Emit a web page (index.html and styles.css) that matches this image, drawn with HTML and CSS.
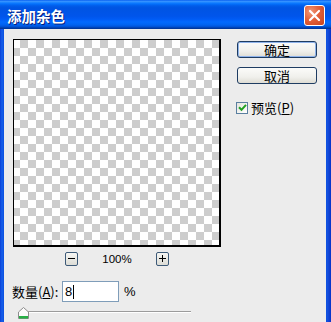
FILE: index.html
```html
<!DOCTYPE html>
<html>
<head>
<meta charset="utf-8">
<link rel="stylesheet" href="styles.css">
</head>
<body>
<div class="window">
  <div class="titlebar">
    <span class="title">添加杂色</span>
    <span class="close">
      <svg width="13" height="13" viewBox="0 0 13 13"><path d="M2 2 L11 11 M11 2 L2 11" stroke="#fff" stroke-width="2.2" stroke-linecap="round"/></svg>
    </span>
  </div>
  <div class="client">
    <div class="top">
      <div class="left">
        <div class="preview"></div>
        <div class="zoomrow">
          <span class="zbtn"><svg width="7" height="7" viewBox="0 0 7 7"><path d="M0 3.5H7" stroke="#000" stroke-width="1"/></svg></span>
          <span class="zlabel">100%</span>
          <span class="zbtn"><svg width="7" height="7" viewBox="0 0 7 7"><path d="M0 3.5H7M3.5 0V7" stroke="#000" stroke-width="1"/></svg></span>
        </div>
      </div>
      <div class="right">
        <div class="btn default">确定</div>
        <div class="btn cancel">取消</div>
        <div class="check">
          <span class="box"><svg width="9" height="9" viewBox="0 0 9 9"><path d="M1 4.2 L3.5 6.8 L8 1.8" fill="none" stroke="#21a121" stroke-width="2"/></svg></span>
          <span class="clabel">预览(<u>P</u>)</span>
        </div>
      </div>
    </div>
    <div class="amount">
      <span class="alabel">数量(<u>A</u>):</span>
      <div class="input"><span>8</span><i class="caret"></i></div>
      <span class="pct">%</span>
    </div>
    <div class="slider">
      <div class="track"></div>
      <svg class="thumb" width="11" height="12" viewBox="0 0 11 12"><path d="M0.5 5 L5.5 0.5 L10.5 5 V11.5 H0.5 Z" fill="#fbfbfb" stroke="#8c8c8c"/><rect x="1" y="9" width="9" height="2.5" fill="#27b045"/></svg>
    </div>
  </div>
</div>
</body>
</html>
```
FILE: styles.css
```css
html, body {
  margin: 0;
  padding: 0;
}
body {
  width: 331px;
  height: 322px;
  overflow: hidden;
  font-family: "Liberation Sans", "Noto Sans CJK SC", sans-serif;
}
.window {
  width: 331px;
  height: 322px;
  display: flex;
  flex-direction: column;
  background: linear-gradient(90deg, #0a3fd8 0, #1660ea 2px, #0b4fe0 4px, #0a4ee0 326px, #1553e0 327px, #0832c8 331px);
}
.titlebar {
  height: 29px;
  flex: none;
  display: flex;
  align-items: center;
  justify-content: space-between;
  padding: 0 6px 0 7px;
  background: linear-gradient(180deg, #0058ee 0%, #3a93ff 4%, #288eff 7%, #127dff 10%, #036ffc 14%, #0262ee 18%, #0057e5 24%, #0054e3 30%, #0055eb 56%, #005bf5 66%, #026afe 76%, #0062ef 86%, #0052d6 92%, #0040ab 96%, #003092 100%);
}
.title {
  color: #fff;
  font-family: "Noto Sans CJK SC", sans-serif;
  font-weight: bold;
  font-size: 14.5px;
  text-shadow: 1px 1px 0 #0a1e7a;
  margin-top: 1px;
}
.close {
  width: 19px;
  height: 19px;
  border: 1px solid #fff;
  border-radius: 3px;
  background: radial-gradient(circle at 30% 30%, #f09878 0, #e2603a 45%, #c8421c 100%);
  display: flex;
  align-items: center;
  justify-content: center;
  margin-top: 1px;
}
.client {
  flex: 1;
  margin: 0 5px 0 4px;
  background: #ececec;
  padding: 10px 0 0 9px;
  font-family: "Noto Sans CJK SC", sans-serif;
  font-size: 12px;
  color: #000;
}
.top {
  display: flex;
  gap: 16px;
}
.left {
  display: flex;
  flex-direction: column;
}
.preview {
  width: 205px;
  height: 205px;
  border-style: solid;
  border-color: #000;
  border-width: 1px 2px 2px 1px;
  background-color: #fff;
  background-image:
    linear-gradient(45deg, #cdcdcd 25%, transparent 25%, transparent 75%, #cdcdcd 75%),
    linear-gradient(45deg, #cdcdcd 25%, transparent 25%, transparent 75%, #cdcdcd 75%);
  background-size: 16px 16px;
  background-position: -2px 0px, 6px 8px;
}
.zoomrow {
  display: flex;
  align-items: center;
  margin-top: 4px;
  padding-left: 52px;
  height: 15px;
}
.zbtn {
  width: 11px;
  height: 12px;
  border: 1px solid #3d5a78;
  border-radius: 2px;
  background: linear-gradient(#f6f6f3, #dcdcd6);
  display: flex;
  align-items: center;
  justify-content: center;
}
.zlabel {
  width: 78px;
  text-align: center;
  font-family: "Liberation Sans", sans-serif;
  font-size: 11.5px;
}
.right {
  display: flex;
  flex-direction: column;
  padding-top: 2px;
}
.btn {
  width: 78px;
  height: 15px;
  border: 1px solid #1e3c62;
  border-radius: 3px;
  background: linear-gradient(#fbfbf9, #f0f0ec 60%, #dedcd4);
  display: flex;
  align-items: center;
  justify-content: center;
  font-size: 13px;
  line-height: 1;
}
.btn.default {
  box-shadow: inset 0 0 0 1px #8fb3ea;
}
.btn.cancel {
  margin-top: 9px;
}
.check {
  display: flex;
  align-items: center;
  margin-top: 17px;
  gap: 3px;
  margin-left: -1px;
}
.box {
  width: 10px;
  height: 10px;
  border: 1px solid #5a7fa0;
  background: linear-gradient(135deg, #e4e4de, #fff);
  display: flex;
  align-items: center;
  justify-content: center;
}
.clabel {
  font-size: 13px;
  line-height: 1;
}
.amount {
  display: flex;
  align-items: center;
  margin-top: 15px;
  height: 21px;
}
.alabel {
  width: 50px;
  font-size: 13px;
  margin-left: -1px;
  line-height: 1;
}
.input {
  width: 53px;
  height: 19px;
  border: 1px solid #7f9db9;
  background: #fff;
  display: flex;
  align-items: center;
  padding-left: 2px;
  box-sizing: content-box;
  font-family: "Liberation Sans", sans-serif;
  font-size: 13px;
}
.caret {
  display: inline-block;
  width: 1px;
  height: 14px;
  background: #000;
  margin-left: 1px;
}
.pct {
  margin-left: 5px;
  font-family: "Liberation Sans", sans-serif;
  font-size: 13px;
}
.slider {
  position: relative;
  height: 14px;
  margin-top: 5px;
  width: 180px;
}
.track {
  position: absolute;
  left: 12px;
  top: 4px;
  width: 166px;
  height: 1px;
  background: #9c9c9c;
  border-bottom: 1px solid #fff;
}
.thumb {
  position: absolute;
  left: 5px;
  top: 0;
}
```
